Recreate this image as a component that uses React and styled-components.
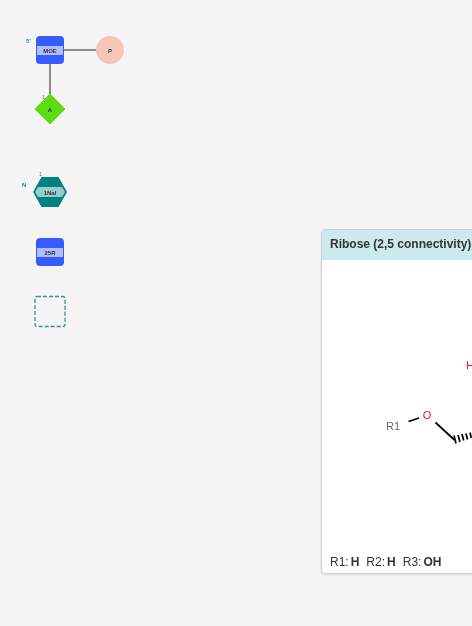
import React from "react";
import styled, { createGlobalStyle } from "styled-components";

const GlobalStyle = createGlobalStyle`
  body {
    margin: 0;
    background: #f5f5f5;
    font-family: "Liberation Sans", Arial, sans-serif;
    color: #333333;
  }
`;

const Workspace = styled.main`
  position: relative;
  min-height: 100vh;
  overflow: hidden;
  will-change: transform;
`;

const Canvas = styled.svg`
  display: block;
  width: 100%;
  height: 100vh;
`;

const MonomerLabel = styled.text`
  font-size: 6px;
  font-weight: 700;
  text-anchor: middle;
  fill: #333333;
`;

const TerminalLabel = styled.text`
  font-size: 6px;
  font-weight: 700;
  fill: #0097a8;
`;

const IndexLabel = styled.text`
  font-size: 6px;
  fill: #7c7c7f;
`;

const Preview = styled.aside`
  position: absolute;
  top: 229px;
  left: 321px;
  width: 360px;
  box-sizing: border-box;
  border: 1px solid #cad3dd;
  border-radius: 4px;
  background: #ffffff;
  box-shadow: 0 1px 2px rgba(103, 104, 132, 0.2);
  overflow: hidden;
`;

const PreviewTitle = styled.h2`
  margin: 0;
  padding: 0 8px 2px;
  font-size: 12px;
  line-height: 28px;
  font-weight: 700;
  background: #cceaee;
`;

const Structure = styled.svg`
  display: block;
  width: 100%;
  height: 290px;
`;

const AtomLabel = styled.text`
  font-size: 11px;
  text-anchor: middle;
  fill: ${({ $color }) => $color};
`;

const AttachmentPoints = styled.dl`
  display: flex;
  gap: 7px;
  margin: 0;
  padding: 3px 8px 2px;
  font-size: 12px;
  line-height: 18px;
`;

const AttachmentPoint = styled.div`
  display: flex;
  gap: 2px;
`;

const LeavingGroup = styled.dd`
  margin: 0;
  font-weight: 700;
`;

const attachments = [
  ["R1", "H"],
  ["R2", "H"],
  ["R3", "OH"],
];

function Sugar({ y, name }) {
  return (
    <g>
      <rect x="36" y={y - 14} width="28" height="28" rx="4" fill="#365cff" />
      <rect x="37" y={y - 4} width="26" height="9" fill="#afbeff" />
      <MonomerLabel x="50" y={y + 3}>{name}</MonomerLabel>
    </g>
  );
}

export default function App() {
  return (
    <>
      <GlobalStyle />
      <Workspace>
        <Canvas role="img" aria-label="Monomer sequence">
          <path d="M50 50H110M50 50V109" stroke="#8d8d8d" strokeWidth="2" fill="none" />
          <Sugar y={50} name="MOE" />
          <TerminalLabel x="26" y="43">5’</TerminalLabel>
          <circle cx="110" cy="50" r="14" fill="#f5c6b8" />
          <MonomerLabel x="110" y="53">P</MonomerLabel>
          <IndexLabel x="42" y="99">1</IndexLabel>
          <path d="M50 94L65 109L50 124L35 109Z" fill="#5ddc13" stroke="#5ddc13" strokeLinejoin="round" />
          <MonomerLabel x="50" y="112">A</MonomerLabel>

          <TerminalLabel x="22" y="187">N</TerminalLabel>
          <IndexLabel x="39" y="176">1</IndexLabel>
          <path d="M41.5 177H58.5L67 192L58.5 207H41.5L33 192Z" fill="#008281" />
          <path d="M38 187H62L65 192L62 197H38L35 192Z" fill="#99cdcc" />
          <MonomerLabel x="50" y="195">1Nal</MonomerLabel>

          <Sugar y={252} name="25R" />
          <rect x="35" y="296.5" width="30" height="30" rx="2" fill="none" stroke="#3d9092" strokeWidth="1.3" strokeDasharray="4 2" />
        </Canvas>

        <Preview>
          <PreviewTitle>Ribose (2,5 connectivity)</PreviewTitle>
          <Structure role="img" aria-label="Ribose structure">
            <AtomLabel x="148" y="109" $color="#ff0d0d">H</AtomLabel>
            <AtomLabel x="71" y="170" $color="#666666">R1</AtomLabel>
            <AtomLabel x="105" y="159" $color="#ff0d0d">O</AtomLabel>
            <g fill="none" stroke="#000000" strokeWidth="1.7">
              <path d="M86.5 161.5L97 158M113.5 162.5L132.5 180" />
              <path d="M132 175.5L134 183.5M136 175L138 182M140 174L141.7 180.5M144 173.5L145.5 179.5M148 172.5L149.3 178M152 171.5L153 176.5" />
            </g>
          </Structure>
          <AttachmentPoints>
            {attachments.map(([point, group]) => (
              <AttachmentPoint key={point}>
                <dt>{point}:</dt>
                <LeavingGroup>{group}</LeavingGroup>
              </AttachmentPoint>
            ))}
          </AttachmentPoints>
        </Preview>
      </Workspace>
    </>
  );
}
